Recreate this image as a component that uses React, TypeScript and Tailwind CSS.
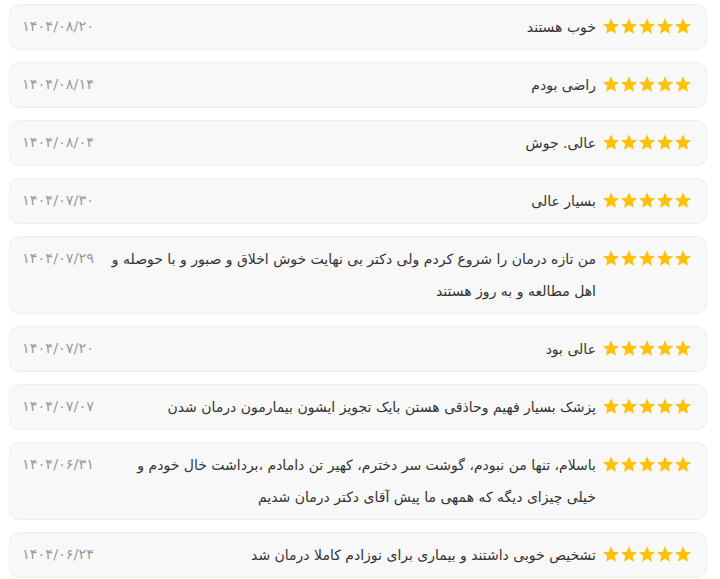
import React from "react";

const reviews = [
  { text: "خوب هستند", date: "۱۴۰۴/۰۸/۲۰" },
  { text: "راضی بودم", date: "۱۴۰۴/۰۸/۱۴" },
  { text: "عالی. جوش", date: "۱۴۰۴/۰۸/۰۴" },
  { text: "بسیار عالی", date: "۱۴۰۴/۰۷/۳۰" },
  {
    text: "من تازه درمان را شروع کردم ولی دکتر بی نهایت خوش اخلاق و صبور و با حوصله و اهل مطالعه و به روز هستند",
    date: "۱۴۰۴/۰۷/۲۹",
  },
  { text: "عالی بود", date: "۱۴۰۴/۰۷/۲۰" },
  {
    text: "پزشک بسیار فهیم وحاذقی هستن بایک تجویز ایشون بیمارمون درمان شدن",
    date: "۱۴۰۴/۰۷/۰۷",
  },
  {
    text: "باسلام، تنها من نبودم، گوشت سر دخترم، کهیر تن دامادم ،برداشت خال خودم و خیلی چیزای دیگه که همهی ما پیش آقای دکتر درمان شدیم",
    date: "۱۴۰۴/۰۶/۳۱",
  },
  {
    text: "تشخیص خوبی داشتند و بیماری برای نوزادم کاملا درمان شد",
    date: "۱۴۰۴/۰۶/۲۴",
  },
];

function Star() {
  return (
    <svg width="18" height="17" viewBox="0 0 24 23" className="block">
      <path
        d="M12 0.5l3.09 7.26 7.86.69-5.96 5.18 1.79 7.69L12 17.27l-6.78 4.05 1.79-7.69L1.05 8.45l7.86-.69z"
        fill="#ffc107"
      />
    </svg>
  );
}

export default function App() {
  return (
    <div
      dir="rtl"
      className="w-[720px] bg-white pt-1 pr-[13px] pl-[9px] flex flex-col gap-3"
      style={{ fontFamily: '"DejaVu Sans", sans-serif' }}
    >
      {reviews.map((r, i) => (
        <div
          key={i}
          className="flex items-start rounded-[10px] border border-[#efefef] bg-[#f8f8f8] py-[6px] pr-[14px] pl-[12px]"
        >
          <div className="flex h-[31px] shrink-0 items-center">
            <Star />
            <Star />
            <Star />
            <Star />
            <Star />
          </div>
          <div className="mr-[6px] flex-1 text-[14px] leading-[32px] text-[#333]">
            {r.text}
          </div>
          <div className="mr-[14px] shrink-0 text-[14.5px] leading-[31px] text-[#9a9a9a]">
            {r.date}
          </div>
        </div>
      ))}
    </div>
  );
}
